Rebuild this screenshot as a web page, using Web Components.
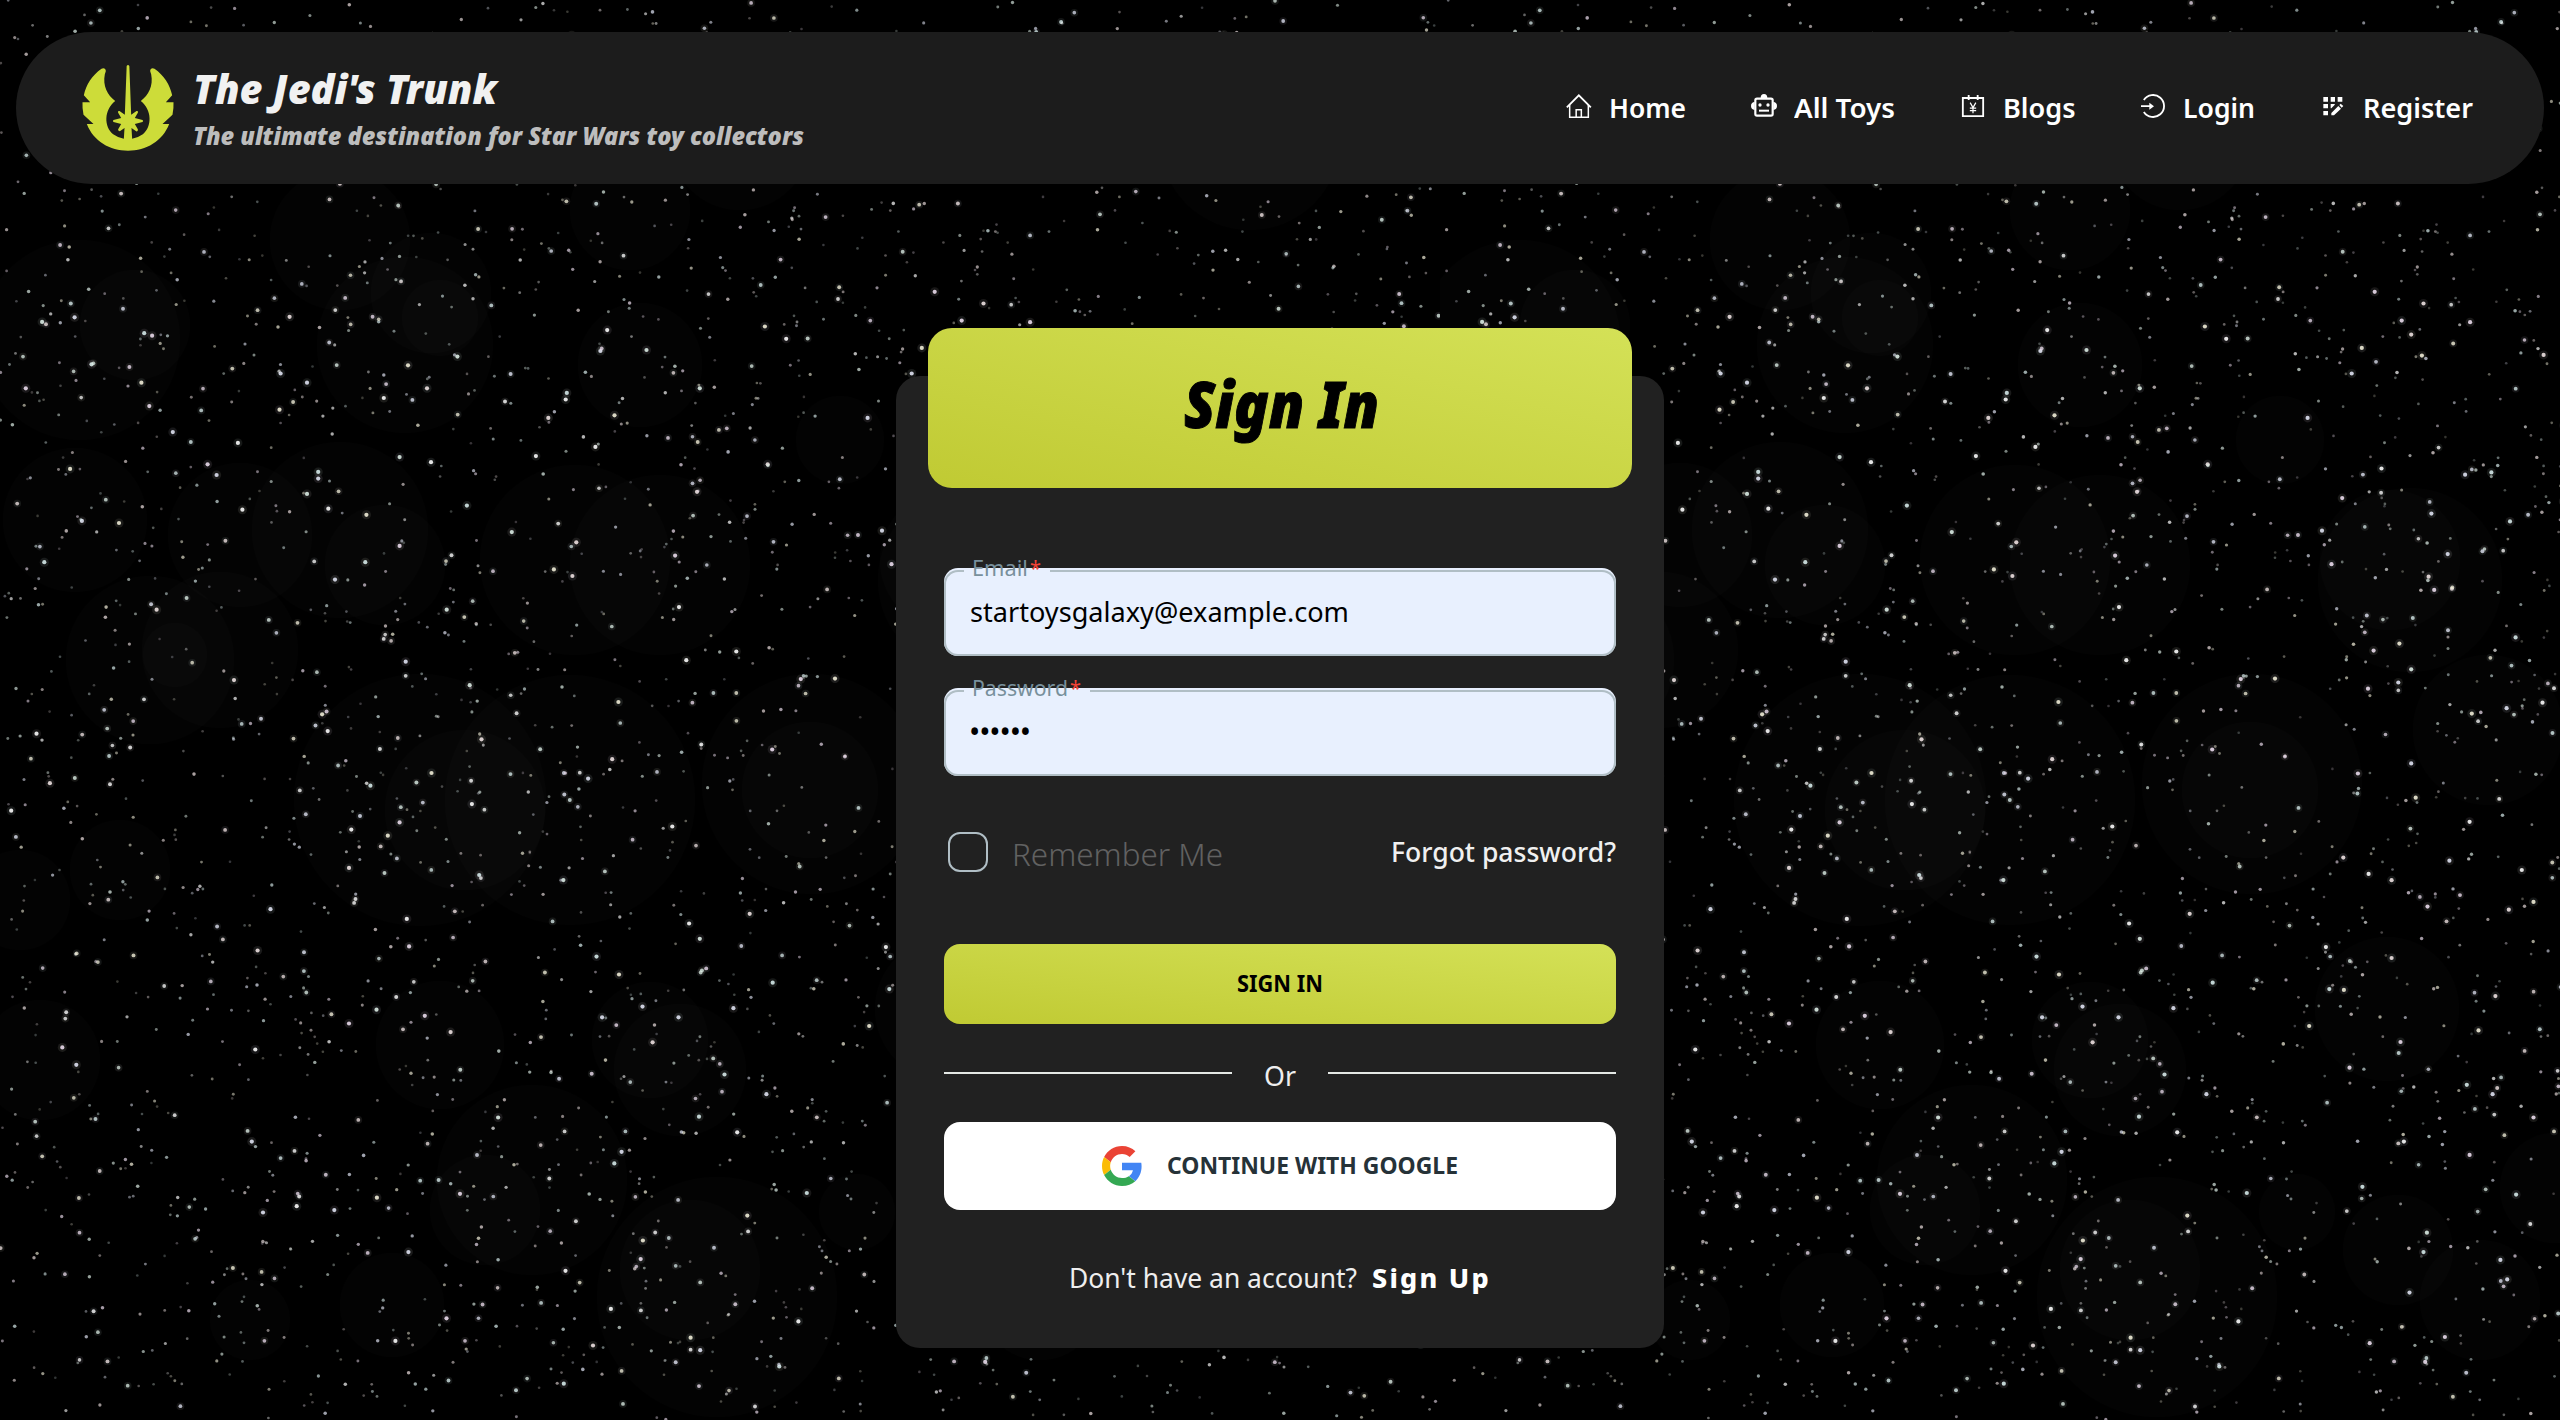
<!DOCTYPE html>
<html lang="en">
<head>
<meta charset="utf-8">
<title>The Jedi's Trunk</title>
<style>
  html, body { margin: 0; height: 100%; background: #000; overflow: hidden; }
  body { font-family: "Noto Sans", "Open Sans", sans-serif; color: #eee; }
</style>
</head>
<body>
<trunk-page></trunk-page>
<script>
const define = (name, html, setup) => customElements.define(name, class extends HTMLElement {
  constructor() {
    super();
    this.attachShadow({ mode: 'open' }).innerHTML = html;
  }
  connectedCallback() { if (setup) setup.call(this, this.shadowRoot); }
});

/* Text set to an exact measure, by width scaling or (with "track") by tracking */
define('fit-text', `
<style>
  :host { display: block; flex: none; white-space: nowrap; }
  span { display: inline-block; transform-origin: 0 50%; }
</style>
<span><slot></slot></span>`, function (root) {
  const w = +this.getAttribute('w');
  this.style.width = w + 'px';
  const span = root.querySelector('span');
  const natural = span.getBoundingClientRect().width;
  if (this.hasAttribute('track')) {
    span.style.letterSpacing = ((w - natural) / this.textContent.length).toFixed(3) + 'px';
  } else {
    span.style.transform = `scaleX(${(w / natural).toFixed(4)})`;
  }
});

/* Starry sky, tiled every 1440px */
define('star-field', `
<style>
  :host { display: block; position: absolute; inset: 0; background: #000; }
  svg { display: block; width: 100%; height: 100%; }
</style>
<svg><defs><pattern id="sky" width="1440" height="1420" patternUnits="userSpaceOnUse"></pattern></defs>
<rect width="100%" height="100%" fill="url(#sky)"/></svg>`, function (root) {
  let seed = 90210;
  const rnd = () => ((seed = (seed * 1664525 + 1013904223) >>> 0) / 4294967296);
  const out = [];
  const haze = [[80,340,100],[135,325,55],[405,345,88],[440,318,38],[640,365,62],[75,520,72],[340,530,88],[240,535,72],[385,565,60],
    [575,560,95],[660,565,90],[150,660,84],[220,650,78],[175,655,32],[420,800,126],[570,800,125],[465,810,80],[840,440,44],[812,784,110],
    [810,790,68],[120,870,50],[20,900,50],[440,1045,64],[650,1040,58],[680,1070,66],[40,1060,60],[970,580,92],[950,560,70],[1048,730,75],
    [431,293,60],[947,1009,72],[532,1180,95],[485,1210,55],[717,1297,120],[690,1270,70],[857,1212,38],[958,1250,55],[392,1305,52],
    [1115,1188,55],[250,1320,40],[630,210,60],[340,240,70],[1250,140,90],[740,140,70],[1300,420,70],[1040,1300,60]];
  for (const [x, y, r] of haze) out.push(`<circle cx="${x}" cy="${y}" r="${r}" fill="#fff" opacity=".012"/>`);
  const tint = ['#ffffff','#f1e4e4','#dff0e8','#e2e6f6','#f3f0da','#eedff0','#d8ecec'];
  const star = (x, y, r, o) => {
    const c = tint[Math.floor(rnd() * tint.length)];
    out.push(`<circle cx="${x.toFixed(1)}" cy="${y.toFixed(1)}" r="${r.toFixed(2)}" fill="${c}" opacity="${o.toFixed(2)}"/>`);
  };
  const bright = [[1095,226],[832,403],[1102,788],[712,482],[432,411],[769,927],[912,455],[567,337],[567,350],[1198,1032],[1004,1137],
    [459,1275],[455,1469],[1307,1388],[1377,1338],[1103,1322],[725,1213],[729,1267],[854,1127],[79,514],[146,433],[163,126],[46,173],
    [308,259],[370,322],[955,306],[1010,182],[1008,195],[1368,322],[1546,231],[1488,742],[1427,743],[1376,881],[1312,689],[1223,706],
    [279,607],[417,745],[597,548],[651,514],[1020,541],[987,528],[212,437],[125,331],[386,343],[89,947],[20,1001],[65,850],[584,845],
    [574,812],[482,1194],[1247,1252],[1336,1203],[1228,1222],[1209,1406],[1063,1287],[1061,288],[1082,59],[1070,100],[1152,98],[1247,173],
    [1363,52],[1401,76],[815,111],[727,128],[684,192],[761,173],[768,318],[712,308],[500,144],[498,215],[424,280],[547,162],[257,65],
    [271,70],[252,162],[266,208],[75,43],[133,34],[516,33],[622,1113],[712,1024],[691,1050],[626,1038],[660,952],[723,709],[796,607],
    [837,755],[858,861],[1091,900],[1048,938],[841,988],[803,1435],[757,1403],[622,1418],[671,1391],[111,1465],[136,1499],[1163,1455],
    [1145,1385],[1073,1406],[1291,1518],[1549,1423],[1242,376],[1203,501],[1210,602],[1027,475],[653,421],[585,409],[547,380],[977,231]]
    .map(([x, y]) => [x / 1.782, y / 1.96 + 300]);
  const east = [[1238,118],[1286,155],[1303,173],[1322,200],[1408,157],[1325,133],[1215,190],[1197,223],[1399,353],[1339,403],[1368,455],
    [1334,484],[1344,501],[1161,468],[1144,425],[1180,383],[1303,603],[1280,620],[1236,579],[1226,628],[1282,570],[1411,660],[1473,653],
    [1303,724],[1311,768],[1407,799],[1332,908],[1371,849],[1268,874],[1182,845],[1208,737],[1227,866],[1521,902],[1500,861],[1477,912],
    [1151,960],[1268,974],[1183,1015],[1157,1014],[1284,1082],[1193,1115],[1423,1067],[1453,1023],[1290,1210],[1407,1227],[1216,1268],
    [1490,1278],[1331,1327],[1325,1352],[1474,1387],[1462,1362],[1300,1404],[1363,1461],[1229,1469],[1328,1493],[1539,199],[1479,413],
    [1446,350],[1250,345],[1489,562],[1537,646],[1402,1137],[1448,1149],[1521,1179],[820,1478],[661,1425],[580,1376],[392,1277],
    [460,1179],[714,1361],[718,1337],[803,1462],[995,1441],[961,1499],[886,1198],[904,1305],[244,1282],[168,1298],[41,1301],[101,1293],
    [21,1210],[368,1437],[667,1238],[680,1223],[818,1178],[277,1466],[300,1352],[629,1472],[577,1521],[1010,1276],[938,1149]]
    .map(([x, y]) => [240 + x / 1.782, y / 1.285 + 200]);
  for (const [x, y] of bright.concat(east)) {
    star(x, y, 4.5, .1);
    star(x, y, 2.1, .88);
  }
  for (let i = 0; i < 3300; i++) {
    const k = rnd();
    const x = rnd() * 1440, y = rnd() * 1420;
    const r = 1.3 + k * k * .7;
    if (k > .85) star(x, y, 3.8, .09);
    star(x, y, r, .22 + .58 * k);
  }
  root.getElementById('sky').innerHTML = out.join('');
});

define('jedi-mark', `
<style>:host { display: block; flex: none; width: 92px; height: 86px; } svg { display: block; }</style>
<svg width="92" height="86" viewBox="246.5 135 276 258" fill="#cddc39">
  <path d="M305 146C312 142 318 146 318 153Q317 157 315 163C308 197 323 226 346 243C312 270 312 320 340 343Q355 354 372 356L376 352H384.500V392C330 392 281 364 261 312H281L251 284Q247 266 248 247H271L252 226C258 194 277 166 305 146Z"/>
  <path transform="matrix(-1 0 0 1 769 0)" d="M305 146C312 142 318 146 318 153Q317 157 315 163C308 197 323 226 346 243C312 270 312 320 340 343Q355 354 372 356L376 352H384.500V392C330 392 281 364 261 312H281L251 284Q247 266 248 247H271L252 226C258 194 277 166 305 146Z"/>
  <path d="M380.500 138Q384.500 132 388.500 138L394 284L410 273Q416 272 414 278L405 294L428 300Q431 303 428 306L405 312L414 328Q415 335 409 334L395 324L397 357H372L374 324L360 334Q354 334 355 328L364 312L341 306Q338 303 341 300L364 294L355 278Q353 272 359 273L375 284Z"/>
</svg>`);

define('google-mark', `
<style>:host { display: block; flex: none; } svg { display: block; }</style>
<svg width="40" height="40" viewBox="0 0 48 48">
  <path fill="#ea4335" d="M24 9.500c3.540 0 6.710 1.220 9.210 3.600l6.850-6.850C35.900 2.380 30.470 0 24 0 14.620 0 6.510 5.380 2.560 13.220l7.980 6.190C12.430 13.720 17.740 9.500 24 9.500z"/>
  <path fill="#4285f4" d="M47.500 24.550c0-1.570-.15-3.090-.38-4.550H24v9.020h13.100c-.58 2.960-2.260 5.480-4.780 7.180l7.730 6c4.510-4.180 7.450-10.360 7.450-17.650z"/>
  <path fill="#fbbc05" d="M10.530 28.590c-.48-1.450-.76-2.990-.76-4.590s.27-3.140.76-4.590l-7.980-6.190C.92 16.460 0 20.120 0 24c0 3.880.92 7.540 2.560 10.780l7.970-6.190z"/>
  <path fill="#34a853" d="M24 48c6.480 0 11.930-2.130 15.890-5.810l-7.730-6c-2.150 1.450-4.920 2.300-8.160 2.300-6.260 0-11.570-4.220-13.470-9.910l-7.980 6.190C6.510 42.620 14.620 48 24 48z"/>
</svg>`);

const glyphs = {
  home: ['73 66 84 84', '<g fill="none" stroke="#fff" stroke-width="4.500"><path d="M78.500 112L114.500 76L150.500 112" stroke-width="5.500"/><path d="M87 105V142H143V105M106.500 142V119.500H122V142"/></g>'],
  robot: ['630 66 84 84', '<rect x="646" y="86" width="52" height="51" rx="5" fill="none" stroke="#fff" stroke-width="6.500"/><path fill="#fff" d="M662 84Q662 72 672 72Q682 72 682 84ZM644 96V120Q633 119 633 108Q633 97 644 96ZM700 96V120Q711 119 711 108Q711 97 700 96Z"/><path fill="#fff" d="M657 119H687V125H657Z"/><circle cx="660" cy="105" r="5" fill="#fff"/><circle cx="684" cy="105" r="5" fill="#fff"/>'],
  yen: ['1254 66 84 84', '<g fill="none" stroke="#fff"><path stroke-width="5.500" d="M1265.500 84H1326.500V138.500H1265.500ZM1283 75V90M1310 75V90"/><path stroke-width="3.600" d="M1287.500 98L1296 113L1304.500 98M1296 112V130M1286.500 114.500H1305.500M1286.500 122H1305.500"/></g>'],
  login: ['294 216 84 84', '<path fill="none" stroke="#fff" stroke-width="5.500" d="M308.500 240A33 33 0 1 1 308.500 276M300 258.500H332"/><path fill="#fff" d="M325 248L339 258.500L325 269Z"/>'],
  register: ['835 216 84 84', '<path fill="#fff" d="M848 231h14v14h-14zM870 231h13v14h-13zM891 231h14v14h-14zM848 252h14v13h-14zM870 252h13l-2 4-9 9h-2zM848 273h14v13h-14zM872 279L893 258L901 266L880 286H872ZM896 255L900 251L908 258L903 263Z"/>']
};
define('nav-item', `
<style>
  :host { display: flex; align-items: center; gap: 16px; font-size: 26.500px; line-height: 40px; font-weight: 600; color: #fff; }
  svg { display: block; margin-top: -4px; }
  ::slotted(*) { margin-top: -1px; }
</style>
<svg width="28" height="28"></svg><slot></slot>`, function (root) {
  const [box, art] = glyphs[this.getAttribute('icon')];
  const svg = root.querySelector('svg');
  svg.setAttribute('viewBox', box);
  svg.innerHTML = art;
});

define('site-header', `
<style>
  :host { display: flex; align-items: center; justify-content: space-between; box-sizing: border-box; height: 152px; margin: 32px 16px 0;
    padding: 0 71px 0 66px; border-radius: 76px; background: #1c1c1c; position: relative; }
  .brand { display: flex; align-items: center; gap: 19px; }
  .names { display: flex; flex-direction: column; gap: 4px; margin-top: 2px; font-style: italic; font-weight: 900; }
  .title { font-size: 40px; line-height: 48px; color: #f1f1f1; }
  .sub { font-size: 25px; line-height: 36px; color: #bdbdbd; }
  nav { display: flex; gap: 64px; }
</style>
<div class="brand"><jedi-mark></jedi-mark>
  <div class="names"><fit-text class="title" w="304">The Jedi's Trunk</fit-text>
  <fit-text class="sub" w="611">The ultimate destination for Star Wars toy collectors</fit-text></div></div>
<nav>
  <nav-item icon="home"><fit-text w="77">Home</fit-text></nav-item>
  <nav-item icon="robot"><fit-text w="101">All Toys</fit-text></nav-item>
  <nav-item icon="yen"><fit-text w="72.500">Blogs</fit-text></nav-item>
  <nav-item icon="login"><fit-text w="72">Login</fit-text></nav-item>
  <nav-item icon="register"><fit-text w="110">Register</fit-text></nav-item>
</nav>`);

define('form-field', `
<style>
  :host { display: flex; align-items: center; box-sizing: border-box; position: relative; height: 88px; padding-left: 26px;
    border-radius: 14px; background: #e8f0fe; color: #000; font-size: 27px; line-height: 40px; }
  .frame { position: absolute; inset: 2px 0 0; display: flex; }
  .frame > * { box-sizing: border-box; border: 0 solid #b0bec5; border-bottom-width: 2px; }
  .frame > .start { width: 20px; border-width: 2px 0 2px 2px; border-radius: 14px 0 0 14px; }
  .frame > .end { flex: 1; border-width: 2px 2px 2px 0; border-radius: 0 14px 14px 0; }
  .label { padding: 0 9px 0 8px; }
  .tag { display: flex; gap: 2px; margin-top: -14px; font-size: 21.500px; line-height: 24px; color: #78909c; }
  .star { color: #f44336; }
</style>
<slot></slot>
<div class="frame"><div class="start"></div>
<div class="label"><div class="tag"><slot name="label"></slot><fit-text class="star" w="11">*</fit-text></div></div><div class="end"></div></div>`);

define('lime-panel', `
<style>
  :host { display: flex; align-items: center; justify-content: center; background: linear-gradient(to top right, #c0ca33, #d4e157); color: #000; }
</style><slot></slot>`);

define('or-divider', `
<style>
  :host { display: flex; align-items: center; height: 44px; gap: 32px; font-size: 27px; line-height: 40px; color: #eee; }
  i { flex: 1; height: 2px; background: #e4e8e5; }
  fit-text { margin-top: 6px; }
</style><i></i><fit-text w="32">Or</fit-text><i></i>`);

define('sign-in-card', `
<style>
  :host { display: flex; flex-direction: column; box-sizing: border-box; position: relative; width: 768px; height: 972px; margin: 192px auto 0;
    padding: 0 48px; border-radius: 24px; background: #212121; }
  .banner { height: 160px; margin: -48px -16px 80px; border-radius: 24px; font-style: italic; font-weight: 900;
    font-size: 64px; line-height: 80px; }
  .banner fit-text { margin: -8px 0 0 2px; -webkit-text-stroke: 1px #000; }
  form-field { margin-bottom: 32px; }
  .dots { font-size: 30px; margin-left: -1px; }
  .row { display: flex; align-items: center; height: 40px; margin: 24px 0 72px; }
  .box { box-sizing: border-box; width: 40px; height: 40px; margin: 0 24px 0 4px; border: 2px solid #b0bec5; border-radius: 12px; }
  .remember { font-size: 31px; line-height: 40px; font-weight: 300; color: #616161; margin-top: 3px; }
  .forgot { margin-left: auto; font-size: 27px; line-height: 40px; font-weight: 500; color: #f0f0f0; }
  .submit { height: 80px; border-radius: 16px; font-size: 24px; line-height: 36px; font-weight: 700; }
  .submit fit-text, .google fit-text { margin-top: -2px; }
  or-divider { margin: 27px 0; }
  .google { display: flex; align-items: center; justify-content: center; gap: 25px; height: 88px; border-radius: 16px; background: #fff;
    color: #263238; font-size: 24px; line-height: 36px; font-weight: 700; }
  .join { display: flex; justify-content: center; gap: 15px; margin-top: 48px; font-size: 27px; line-height: 40px; }
  .up { color: #fff; font-weight: 800; }
</style>
<lime-panel class="banner"><fit-text w="195">Sign In</fit-text></lime-panel>
<form-field><fit-text w="379">startoysgalaxy@example.com</fit-text><fit-text slot="label" w="56">Email</fit-text></form-field>
<form-field><fit-text class="dots" track w="61">••••••</fit-text><fit-text slot="label" w="96">Password</fit-text></form-field>
<div class="row"><div class="box"></div><fit-text class="remember" w="211">Remember Me</fit-text><fit-text class="forgot" w="225">Forgot password?</fit-text></div>
<lime-panel class="submit"><fit-text w="86">SIGN IN</fit-text></lime-panel>
<or-divider></or-divider>
<div class="google"><google-mark></google-mark><fit-text w="291">CONTINUE WITH GOOGLE</fit-text></div>
<div class="join"><fit-text w="288">Don't have an account?</fit-text><fit-text class="up" track w="119">Sign Up</fit-text></div>`);

define('trunk-page', `
<style>
  :host { display: flow-root; position: relative; width: 2560px; height: 1420px; overflow: hidden; }
</style>
<star-field></star-field>
<site-header></site-header>
<sign-in-card></sign-in-card>`);
</script>
</body>
</html>
